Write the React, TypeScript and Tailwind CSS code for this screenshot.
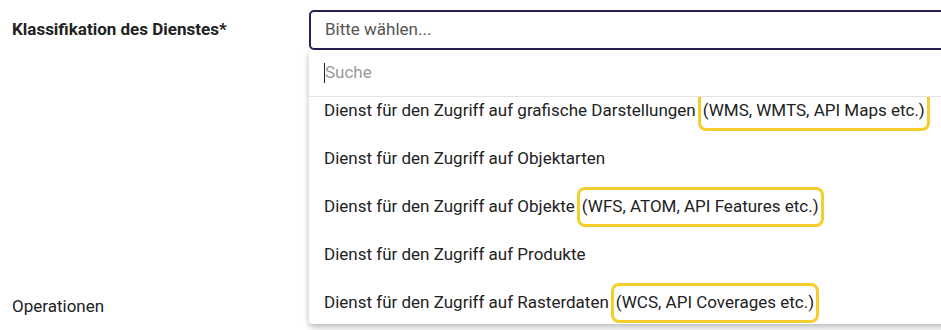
import React from "react";

type Option = { text: string; hint?: string };

const options: Option[] = [
  { text: "Dienst für den Zugriff auf grafische Darstellungen", hint: "(WMS, WMTS, API Maps etc.)" },
  { text: "Dienst für den Zugriff auf Objektarten" },
  { text: "Dienst für den Zugriff auf Objekte", hint: "(WFS, ATOM, API Features etc.)" },
  { text: "Dienst für den Zugriff auf Produkte" },
  { text: "Dienst für den Zugriff auf Rasterdaten", hint: "(WCS, API Coverages etc.)" },
];

// ============== Select field with open dropdown =================
function ClassificationSelect() {
  return (
    <div className="relative w-[680px] shrink-0">
      <div className="h-[40px] flex items-center px-[14px] border-2 border-[#25214f] rounded-[5px] text-[17px] text-[#555555]">
        Bitte wählen...
      </div>

      {/* Dropdown panel */}
      <div className="absolute left-0 right-0 top-[40px] bg-white rounded-b-[4px] shadow-[0_3px_6px_rgba(0,0,0,0.28)] z-10">
        <div className="h-[47px] flex items-center px-[15px] border-b border-[#e2e2e2]">
          <span className="w-px h-[20px] bg-[#222222]" />
          <span className="text-[17px] text-[#9a9a9a]">Suche</span>
        </div>
        <div className="h-[227px] overflow-hidden">
          <div className="-mt-[10px]">
            {options.map((o) => (
              <div key={o.text} className="h-[48px] flex items-center px-[15px] text-[17px] text-[#222222] whitespace-nowrap">
                <span>{o.text}</span>
                {o.hint && (
                  <span className="ml-[5px] py-[4px] px-[2px] rounded-[5px] outline-[3px] outline-solid outline-[#f5cd2c]">
                    {o.hint}
                  </span>
                )}
              </div>
            ))}
          </div>
        </div>
      </div>
    </div>
  );
}

export default function App() {
  return (
    <div className="w-[941px] h-[330px] overflow-hidden bg-white font-['Roboto',sans-serif]">
      <div className="pt-[10px]">
        <div className="flex items-center">
          <div className="w-[309px] shrink-0 pl-[12px] text-[17px] font-bold text-[#222222]">
            Klassifikation des Dienstes*
          </div>
          <ClassificationSelect />
        </div>

        <div className="mt-[245px] h-[24px] flex items-center pl-[12px] text-[17px] text-[#222222]">
          Operationen
        </div>
      </div>
    </div>
  );
}
